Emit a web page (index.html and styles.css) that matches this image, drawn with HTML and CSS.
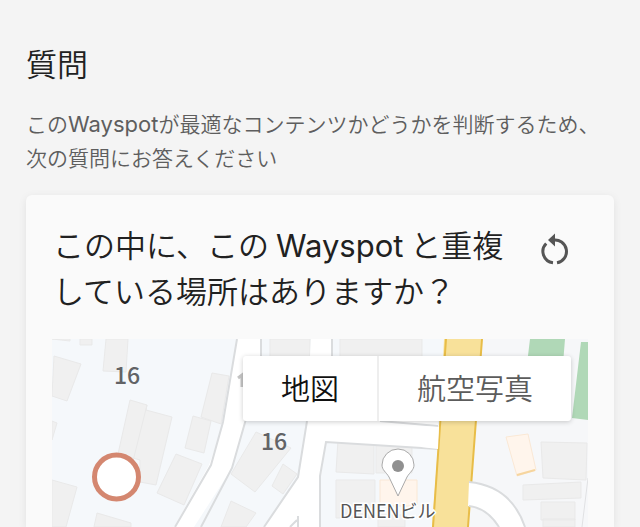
FILE: index.html
```html
<!DOCTYPE html>
<html lang="ja">
<head>
<meta charset="utf-8">
<meta name="viewport" content="width=device-width, initial-scale=1">
<title>質問</title>
<link rel="stylesheet" href="styles.css">
</head>
<body>
<main class="page">
  <h1 class="page-title">質問</h1>
  <p class="intro">この<span class="latin">Wayspot</span>が最適なコンテンツかどうかを判断するため、<br>次の質問にお答えください</p>
  <section class="card">
    <header class="card-header">
      <h2 class="question">この中に、この <span class="latin">Wayspot</span> と重複<br>している場所はありますか？</h2>
      <button class="reset" type="button" aria-label="リセット">
        <svg viewBox="0 0 28 34" aria-hidden="true">
          <path class="reset-arc" d="M5.200 10.500A11.400 11.400 0 0 0 12 29.800M16 29.800A11.400 11.400 0 0 0 12 7.200"/>
          <path class="reset-head" d="M14 .5v13L7 7z"/>
        </svg>
      </button>
    </header>
    <div class="map">
      <svg class="map-canvas" viewBox="52 339 536 188" preserveAspectRatio="xMidYMin slice" role="img" aria-label="地図">
        <rect class="land" x="52" y="339" width="536" height="188"/>
        <path class="block" d="M444 339h144v188H440z"/>
        <g class="building">
          <path d="M52 339h18v2zM80 339h12v6h-12zM106 339h22l-2 33-23-1zM54 356l27 8-14 37-15-5zM52 421l5 2-5 17zM52 480l25 7-11 40H52zM130 400l17 5-1 5 26 7-16 68-16-3 0-22-22-6zM147 405l-15 60M212 373l17 3-8 48-20-7zM193 416l18 5-7 32-19-5zM176 454l26 10-18 41-27-12zM97 513l34 10v4H94z"/>
          <path d="M270 339h40v24h-40zM340 339h82v24h-82zM256 432l35 16-36 44-24-18zM283 464l14 10-14 20-11-8zM231 501l25 12-10 14h-25zM338 440h36v34l-38-2zM336 480h39v38h-39zM376 445h36v28h-36zM378 515h27v12h-27z"/>
          <path d="M541 442l46 1-1 37-43-2zM523 485l58-3v16l-58 2zM541 502h34v18h-34zM543 519h32v8h-32z"/>
        </g>
        <path class="shop" d="M506 437l22-3 8 36-19 6zM380 480h37v26h-37z"/>
        <path class="shop-edge" d="M517 475l18-5"/>
        <path class="park" d="M530 339h35l-2 25h-36zM581 342h7v78l-16-2z"/>
        <path class="road" d="M237 339h25v60l-16 20-14 49-38 59h-20l35-62 14-39zM311 339h21v25h106v85l-112-7-5 34v51h-57l35-50 7-53z"/>
        <path class="road-edge" d="M237 339l-14 83-12 43-36 62M246 419l-14 49-31 59M261 339v24M332 339v24M307 421l-9 56-34 50M297 520l-7 7M298 516v11M438 449l-112-7-6 34v51M380 421l58 5"/>
        <path class="block-edge" d="M588 478l-6 49"/>
        <path class="avenue" d="M444 339h38l-14 188h-36l8-106z"/>
        <path class="avenue-edge" d="M446 339l-13 188M482 339l-14 188"/>
        <path class="road" d="M439 427l-18-1v21l17 2zM469 482q42 4 56 45h-25q-10-19-32-21z"/>
        <path class="road-edge" d="M469 482q42 4 56 45M469 506q18 2 30 21"/>
        <text class="number" x="114" y="384">16</text>
        <text class="number" x="261" y="450">16</text>
        <path class="number-hidden" d="M238 378l4-3v12"/>
        <path class="pin" d="M398 496l-9-19c-3-5-7-7-7-12a16 16 0 0 1 32 0c0 5-4 7-7 12z"/>
        <circle class="pin-dot" cx="398" cy="466" r="6"/>
        <text class="place" x="340" y="518">DENENビル</text>
        <circle class="marker" cx="116.500" cy="477" r="22"/>
      </svg>
      <div class="map-types" role="group" aria-label="地図の種類">
        <button class="map-type is-active" type="button">地図</button>
        <button class="map-type" type="button">航空写真</button>
      </div>
    </div>
  </section>
</main>
</body>
</html>
```
FILE: styles.css
```css
* { box-sizing: border-box; }

body {
  margin: 0;
  background: #f4f4f4;
  color: #212121;
  font-family: "Noto Sans CJK JP", sans-serif;
  font-weight: 350;
}

h1, h2, p { margin: 0; font-weight: 350; }

.latin { font-family: Inter, sans-serif; font-weight: 400; line-height: 1; }

.page { padding: 41px 26px 0; }

.page-title { font-size: 31px; line-height: 44px; }

.intro {
  margin-top: 21px;
  color: #5e5e5e;
  font-size: 21px;
  line-height: 34px;
  white-space: nowrap;
}

.intro .latin { font-size: 22px; }

.card {
  margin-top: 21px;
  padding: 26px 26px 0;
  border-radius: 6px 6px 0 0;
  background: #fafafa;
  box-shadow: 0 2px 8px rgba(0, 0, 0, .08);
}

.card-header {
  display: flex;
  align-items: flex-start;
  justify-content: space-between;
  padding: 0 19px 0 1px;
}

.question { font-size: 31px; line-height: 46px; white-space: nowrap; }

.reset {
  margin-top: 12px;
  padding: 0;
  border: 0;
  background: none;
}

.reset svg { display: block; width: 28px; height: 34px; }
.reset-arc { fill: none; stroke: #555; stroke-width: 3; }
.reset-head { fill: #555; }

.map {
  position: relative;
  margin-top: 26px;
}

.map-canvas { display: block; width: 100%; }

.land { fill: #f5f8fb; }
.block { fill: #f6f7f9; }
.building { fill: #f0f0f0; stroke: #e9e9e9; }
.road { fill: #fff; }
.road-edge { fill: none; stroke: #dadcde; stroke-width: 2; }
.block-edge { fill: none; stroke: #e0e1e3; stroke-width: 1; }
.avenue { fill: #f8e19a; }
.avenue-edge { fill: none; stroke: #e8bd48; stroke-width: 2; }
.park { fill: #b0d8b7; }
.shop { fill: #fff5ec; stroke: #fae8d5; }
.shop-edge { stroke: #f6d59e; stroke-width: 2; }
.number { fill: #626366; font-size: 23px; font-weight: 500; }
.number-hidden { fill: none; stroke: #c5c5c5; stroke-width: 3; }
.place { fill: #555; stroke: #fff; stroke-width: 3; paint-order: stroke; font-size: 18px; font-weight: 400; }
.pin { fill: #fff; stroke: #aaa; }
.pin-dot { fill: #909090; }
.marker { fill: #fff; stroke: #d48770; stroke-width: 5; }

.map-types {
  position: absolute;
  top: 17px;
  right: 17px;
  display: flex;
  border-radius: 3px;
  background: #fff;
  box-shadow: 0 1px 5px rgba(0, 0, 0, .2);
}

.map-type {
  padding: 0 38px 2px;
  border: 0;
  border-left: 2px solid #eee;
  background: none;
  color: #5c5c5c;
  font: inherit;
  font-size: 29px;
  line-height: 63px;
}

.map-type.is-active { border-left: 0; color: #111; }
```
